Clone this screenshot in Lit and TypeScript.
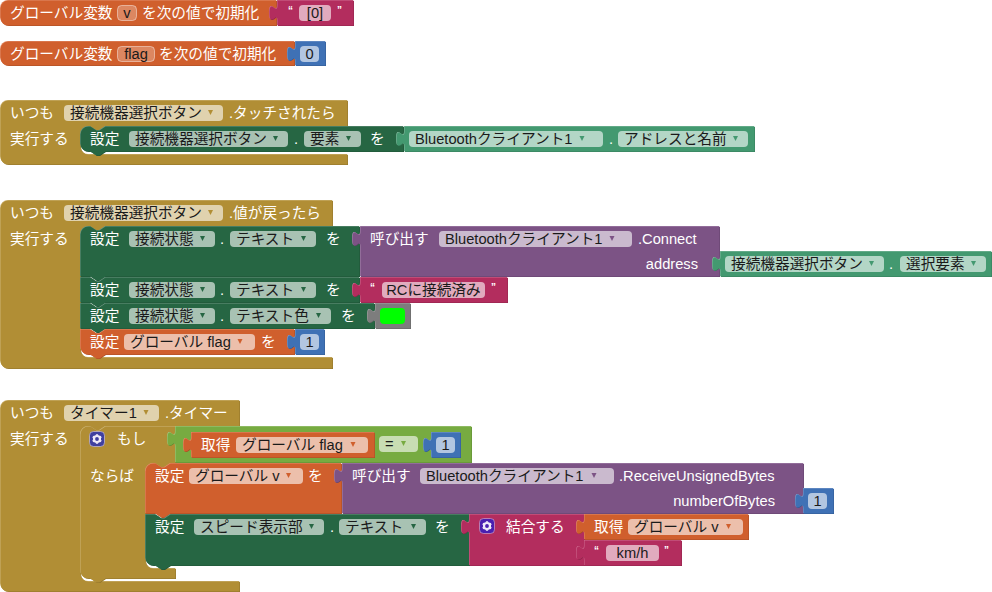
import { LitElement, html, svg, css } from "lit";
import { customElement } from "lit/decorators.js";

type Col = "orange" | "pink" | "blue" | "tan" | "green" | "teal" | "purple" | "gray" | "lime";

const ARROW: Record<Col, string> = {
  orange: "#d05f2d", pink: "#b32d5e", blue: "#3f71b5", tan: "#b18e35", green: "#266643",
  teal: "#439970", purple: "#7c5385", gray: "#7d7d7d", lime: "#77ab41",
};

const NOTCH_R = "l 6,4 3,0 6,-4";
const NOTCH_L = "l -6,4 -3,0 -6,-4";
const TAB_UP = "c 0,-10 -8,8 -8,-7.5 s 8,2.5 8,-7.5";

interface Opt { tl?: boolean; bl?: boolean; tab?: boolean; top?: boolean; bottom?: boolean }

function blockPath(x: number, y: number, w: number, h: number, o: Opt) {
  let d = o.tl ? `M ${x},${y + 8} a 8,8 0 0 1 8,-8 ` : `M ${x},${y} `;
  if (o.top) d += `L ${x + 10},${y} ${NOTCH_R} `;
  d += `L ${x + w},${y} L ${x + w},${y + h} `;
  if (o.bottom) d += `L ${x + 25},${y + h} ${NOTCH_L} `;
  d += o.bl ? `L ${x + 8},${y + h} a 8,8 0 0 1 -8,-8 ` : `L ${x},${y + h} `;
  if (o.tab) d += `L ${x},${y + 20} ${TAB_UP} `;
  return d + "Z";
}

function cPath(x: number, y: number, w: number, headH: number, inner: number, stmtB: number, capB: number, capW: number, notched: boolean) {
  let d = `M ${x},${y + 8} a 8,8 0 0 1 8,-8 `;
  if (notched) d += `L ${x + 10},${y} ${NOTCH_R} `;
  d += `L ${x + w},${y} L ${x + w},${y + headH} L ${inner + 25},${y + headH} ${NOTCH_L} `;
  d += `L ${inner + 8},${y + headH} a 8,8 0 0 0 -8,8 L ${inner},${stmtB - 8} a 8,8 0 0 0 8,8 `;
  d += `L ${x + capW},${stmtB} L ${x + capW},${capB} `;
  if (notched) d += `L ${x + 25},${capB} ${NOTCH_L} `;
  d += `L ${x + 8},${capB} a 8,8 0 0 1 -8,-8 Z`;
  return d;
}

const shape = (c: Col, d: string) => svg`<g class=${c}>
  <path class="d" d=${d} transform="translate(1 1)"></path>
  <path class="h" d=${d}></path>
  <path class="m" d=${d} transform="translate(.5 .5)"></path>
</g>`;

const B = (c: Col, x: number, y: number, x2: number, y2: number, o: Opt = {}) =>
  shape(c, blockPath(x, y, x2 - x - 1, y2 - y - 1, o));

const L = (x: number, y: number, t: string) => svg`<text class="l" x=${x} y=${y}>${t}</text>`;
const LR = (x: number, y: number, t: string) => svg`<text class="l end" x=${x} y=${y}>${t}</text>`;
const Q = (x: number, top: number, t: string) => svg`<text class="q" x=${x} y=${top + 14}>${t}</text>`;

/* A label at the usual baseline of a row that starts at `top` */
const T = (x: number, top: number, t: string) => L(x, top + 18, t);

/* `ar` is the distance from the field's right end to the centre of its arrow */
const DD = (x1: number, x2: number, top: number, t: string, c: Col, ar = 12.5) => svg`
  <rect class="f" x=${x1} y=${top + 5} width=${x2 - x1} height="16" rx="4"></rect>
  <text class="ft" x=${x1 + 6} y=${top + 18}>${t}</text>
  <polygon style="fill:${ARROW[c]}" points="${x2 - ar - 2.5},${top + 10} ${x2 - ar + 2.5},${top + 10} ${x2 - ar},${top + 15}"></polygon>`;

const TX = (x1: number, x2: number, top: number, t: string) => svg`
  <rect class="f" x=${x1} y=${top + 5} width=${x2 - x1} height="16" rx="4"></rect>
  <text class="ft mid" x=${(x1 + x2) / 2} y=${top + 18}>${t}</text>`;

const IN = (x1: number, x2: number, top: number, t: string) => svg`
  <rect class="fi" x=${x1 + 0.5} y=${top + 5.5} width=${x2 - x1 - 1} height="15" rx="4"></rect>
  <text class="ft mid" x=${(x1 + x2) / 2} y=${top + 18}>${t}</text>`;

const GEAR = (x: number, y: number, cls: string) => svg`
  <g transform="translate(${x} ${y})">
    <rect class=${cls} x="0.5" y="0.5" width="15" height="15" rx="4"></rect>
    <g class="gear">
      <circle cx="8" cy="8" r="3"></circle>
      <path d="M8 3.2V4.6M8 11.4V12.8M3.8 5.6L5 6.3M11 9.7L12.2 10.4M3.8 10.4L5 9.7M11 6.3L12.2 5.6"></path>
    </g>
  </g>`;

const setter = (top: number, x2: number, h: number, second: string, secondEnd: number, deX: number, o: Opt) => svg`
  ${B("green", 80, top, x2, top + h, o)}
  ${T(90, top, "設定")}
  ${DD(129, 215, top, "接続状態", "green")}
  ${T(220, top, ".")}
  ${DD(230, secondEnd, top, second, "green")}
  ${T(deX, top, "を")}`;

@customElement("app-root")
export class AppRoot extends LitElement {
  static styles = css`
    :host { display: block; width: 992px; height: 592px; background: #fff; overflow: hidden; }
    svg { display: block; }
    text { font-family: "Liberation Sans", "Noto Sans CJK JP", sans-serif; font-size: 14.667px; }
    .l { fill: #fff; }
    .end { text-anchor: end; }
    .ft { fill: #1a1a1a; }
    .mid { text-anchor: middle; }
    .q { fill: #fff; font-size: 10px; font-weight: 700; }
    .f { fill: #fff; fill-opacity: 0.6; }
    .fi { fill: #fff; fill-opacity: 0.25; stroke: #fff; stroke-opacity: 0.45; }
    .color-field { fill: #00ff00; }
    .gear circle, .gear path { fill: none; stroke: #efeaf8; }
    .gear circle { stroke-width: 2.2; }
    .gear path { stroke-width: 2.2; }
    .ico-if { fill: #3f3f9f; stroke: #d8cfe8; stroke-opacity: 0.6; }
    .ico-join { fill: #4a1fb0; stroke: #e0b8d0; stroke-opacity: 0.6; }
    .orange .m { fill: #d05f2d; } .orange .h { fill: #e38f6c; } .orange .d { fill: #a64c24; }
    .pink .m { fill: #b32d5e; } .pink .h { fill: #cf6c90; } .pink .d { fill: #8f244b; }
    .blue .m { fill: #3f71b5; } .blue .h { fill: #7d9dcb; } .blue .d { fill: #325a91; }
    .tan .m { fill: #b18e35; } .tan .h { fill: #cdb576; } .tan .d { fill: #8e722a; }
    .green .m { fill: #266643; } .green .h { fill: #6a9580; } .green .d { fill: #1e5236; }
    .teal .m { fill: #439970; } .teal .h { fill: #84bba0; } .teal .d { fill: #367a5a; }
    .purple .m { fill: #7c5385; } .purple .h { fill: #a888ae; } .purple .d { fill: #63426a; }
    .gray .m { fill: #7d7d7d; } .gray .h { fill: #a6a6a6; } .gray .d { fill: #646464; }
    .lime .m { fill: #77ab41; } .lime .h { fill: #a6c885; } .lime .d { fill: #5f8934; }
  `;

  render() {
    return html`<svg width="992" height="592" viewBox="0 0 992 592">
      <!-- global v -->
      ${B("orange", 0, 0, 277, 26, { tl: true, bl: true })}
      ${T(10, 0, "グローバル変数")} ${IN(117, 137, 0, "v")} ${T(142, 0, "を次の値で初期化")}
      ${B("pink", 277, 0, 354, 26, { tab: true })}
      ${Q(288, 0, "“")} ${TX(299, 331, 0, "[0]")} ${Q(337, 0, "”")}

      <!-- global flag -->
      ${B("orange", 0, 41, 295, 66, { tl: true, bl: true })}
      ${T(10, 41, "グローバル変数")} ${IN(117, 155, 41, "flag")} ${T(159, 41, "を次の値で初期化")}
      ${B("blue", 295, 41, 326, 66, { tab: true })}
      ${TX(300, 319, 41, "0")}

      <!-- event 1 -->
      ${shape("tan", cPath(0, 100, 347, 26, 80, 154, 164, 347, false))}
      ${T(10, 100, "いつも")} ${DD(64, 223, 100, "接続機器選択ボタン", "tan")} ${T(229, 100, ".タッチされたら")}
      ${T(10, 126, "実行する")}
      ${B("green", 80, 126, 404, 152, { tl: true, bl: true, top: true, bottom: true })}
      ${T(90, 126, "設定")} ${DD(129, 288, 126, "接続機器選択ボタン", "green")} ${T(294, 126, ".")}
      ${DD(304, 361, 126, "要素", "green")} ${T(370, 126, "を")}
      ${B("teal", 404, 126, 755, 152, { tab: true })}
      ${DD(409, 603, 126, "Bluetoothクライアント1", "teal", 21)} ${T(609, 126, ".")}
      ${DD(618, 748, 126, "アドレスと名前", "teal")}

      <!-- event 2 -->
      ${shape("tan", cPath(0, 200, 332, 26, 80, 357, 368, 332, false))}
      ${T(10, 200, "いつも")} ${DD(64, 223, 200, "接続機器選択ボタン", "tan")} ${T(229, 200, ".値が戻ったら")}
      ${T(10, 226, "実行する")}
      ${setter(226, 360, 51, "テキスト", 316, 326, { tl: true, top: true, bottom: true })}
      ${B("purple", 360, 226, 720, 277, { tab: true })}
      ${T(370, 226, "呼び出す")} ${DD(439, 632, 226, "Bluetoothクライアント1", "purple", 20)} ${T(638, 226, ".Connect")}
      ${LR(698, 269, "address")}
      ${B("teal", 720, 251, 992, 277, { tab: true })}
      ${DD(725, 884, 251, "接続機器選択ボタン", "teal")} ${T(889, 251, ".")}
      ${DD(900, 986, 251, "選択要素", "teal")}

      ${setter(277, 360, 26, "テキスト", 316, 326, { top: true, bottom: true })}
      ${B("pink", 360, 277, 508, 303, { tab: true })}
      ${Q(370, 277, "“")} ${TX(382, 485, 277, "RCに接続済み")} ${Q(491, 277, "”")}

      ${setter(303, 375, 26, "テキスト色", 331, 341, { top: true, bottom: true })}
      ${B("gray", 375, 303, 411, 329, { tab: true })}
      <rect class="color-field" x="380" y="308" width="25" height="16" rx="4"></rect>

      ${B("orange", 80, 329, 295, 355, { top: true, bottom: true, bl: true })}
      ${T(90, 329, "設定")} ${DD(124, 255, 329, "グローバル flag", "orange", 15)} ${T(261, 329, "を")}
      ${B("blue", 295, 329, 325, 355, { tab: true })}
      ${TX(300, 319, 329, "1")}

      <!-- event 3 -->
      ${shape("tan", cPath(0, 400, 239, 26, 80, 581, 591, 239, false))}
      ${T(10, 400, "いつも")} ${DD(64, 159, 400, "タイマー1", "tan", 13)} ${T(165, 400, ".タイマー")}
      ${T(10, 426, "実行する")}

      <!-- if -->
      ${shape("tan", cPath(80, 426, 95, 37, 145, 568, 578, 95, true))}
      ${GEAR(89, 431, "ico-if")} ${T(117, 426, "もし")} ${T(90, 463, "ならば")}

      <!-- condition -->
      ${B("lime", 175, 426, 472, 463, { tab: true })}
      ${B("orange", 191, 432, 375, 458, { tab: true })}
      ${T(201, 432, "取得")} ${DD(236, 368, 432, "グローバル flag", "orange", 15)}
      <rect class="f" x="379" y="436" width="39" height="16" rx="4"></rect>
      <text class="ft" x="385" y="449">=</text>
      <polygon style="fill:${ARROW.lime}" points="401,441 406,441 403.5,446"></polygon>
      ${B("blue", 431, 432, 461, 458, { tab: true })}
      ${TX(436, 455, 432, "1")}

      <!-- then 1 -->
      ${B("orange", 145, 463, 342, 514, { tl: true, top: true, bottom: true })}
      ${T(155, 463, "設定")} ${DD(189, 303, 463, "グローバル v", "orange", 14.5)} ${T(308, 463, "を")}
      ${B("purple", 342, 463, 804, 514, { tab: true })}
      ${T(352, 463, "呼び出す")} ${DD(420, 614, 463, "Bluetoothクライアント1", "purple", 20)}
      ${T(619, 463, ".ReceiveUnsignedBytes")}
      ${LR(775, 506, "numberOfBytes")}
      ${B("blue", 803, 488, 834, 514, { tab: true })}
      ${TX(808, 827, 488, "1")}

      <!-- then 2 -->
      ${B("green", 145, 514, 470, 566, { top: true, bottom: true, bl: true })}
      ${T(155, 514, "設定")} ${DD(194, 324, 514, "スピード表示部", "green")} ${T(330, 514, ".")}
      ${DD(339, 426, 514, "テキスト", "green")} ${T(435, 514, "を")}
      ${B("pink", 469, 514, 585, 566, { tab: true })}
      ${GEAR(479, 518, "ico-join")} ${T(506, 514, "結合する")}
      ${B("orange", 584, 514, 749, 540, { tab: true })}
      ${T(594, 514, "取得")} ${DD(628, 743, 514, "グローバル v", "orange", 14.5)}
      ${B("pink", 584, 540, 682, 566, { tab: true })}
      ${Q(594, 540, "“")} ${TX(606, 659, 540, "km/h")} ${Q(664, 540, "”")}
    </svg>`;
  }
}
